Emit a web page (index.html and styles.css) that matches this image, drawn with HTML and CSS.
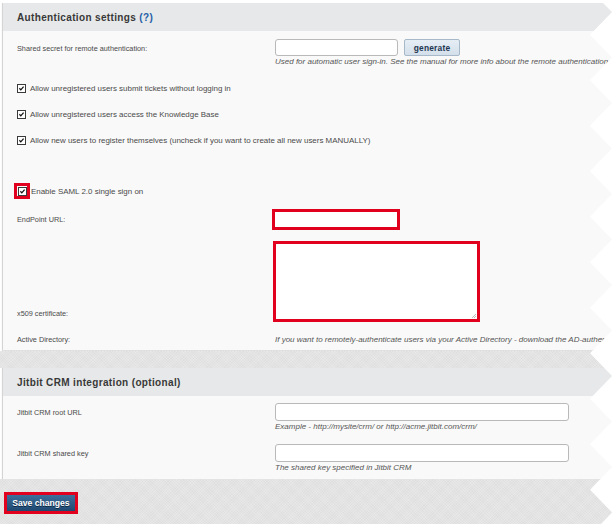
FILE: index.html
```html
<!DOCTYPE html>
<html>
<head>
<meta charset="utf-8">
<link rel="stylesheet" href="styles.css">
</head>
<body>
<div class="page">
  <div class="topline"></div>
  <section class="section">
    <div class="section-head"><h2>Authentication settings <a class="help" href="#">(?)</a></h2></div>
    <div class="section-body s1">
      <div class="row r-secret">
        <div class="label">Shared secret for remote authentication:</div>
        <div class="field">
          <div class="inline">
            <span class="input w-secret"></span>
            <span class="btn-generate">generate</span>
          </div>
          <div class="hint">Used for automatic user sign-in. See the manual for more info about the remote authentication "</div>
        </div>
      </div>
      <div class="row chk-row">
        <span class="chk"><svg viewBox="0 0 9 9" width="9" height="9"><path d="M1.8 4.2 L3.6 6.2 L7.2 2" fill="none" stroke="#111" stroke-width="1.6"/></svg></span>
        <span class="chk-label">Allow unregistered users submit tickets without logging in</span>
      </div>
      <div class="row chk-row">
        <span class="chk"><svg viewBox="0 0 9 9" width="9" height="9"><path d="M1.8 4.2 L3.6 6.2 L7.2 2" fill="none" stroke="#111" stroke-width="1.6"/></svg></span>
        <span class="chk-label">Allow unregistered users access the Knowledge Base</span>
      </div>
      <div class="row chk-row">
        <span class="chk"><svg viewBox="0 0 9 9" width="9" height="9"><path d="M1.8 4.2 L3.6 6.2 L7.2 2" fill="none" stroke="#111" stroke-width="1.6"/></svg></span>
        <span class="chk-label">Allow new users to register themselves (uncheck if you want to create all new users MANUALLY)</span>
      </div>
      <div class="row chk-row saml">
        <span class="mark"><span class="chk"><svg viewBox="0 0 9 9" width="9" height="9"><path d="M1.8 4.2 L3.6 6.2 L7.2 2" fill="none" stroke="#111" stroke-width="1.6"/></svg></span></span>
        <span class="chk-label">Enable SAML 2.0 single sign on</span>
      </div>
      <div class="row r-endpoint">
        <div class="label">EndPoint URL:</div>
        <div class="field"><span class="input red w-endpoint"></span></div>
      </div>
      <div class="row r-cert">
        <div class="label">x509 certificate:</div>
        <div class="field"><span class="input red textarea"><svg class="grip" viewBox="0 0 6 6" width="6" height="6"><path d="M5 1 L1 5 M5 3 L3 5" stroke="#aaa" stroke-width="0.8"/></svg></span></div>
      </div>
      <div class="row r-ad">
        <div class="label">Active Directory:</div>
        <div class="field"><div class="hint">If you want to remotely-authenticate users via your Active Directory - download the AD-authenticator</div></div>
      </div>
    </div>
  </section>
  <div class="hatch gap"></div>
  <section class="section">
    <div class="section-head"><h2>Jitbit CRM integration (optional)</h2></div>
    <div class="section-body s2">
      <div class="row r-crm">
        <div class="label">Jitbit CRM root URL</div>
        <div class="field">
          <span class="input w-crm"></span>
          <div class="hint">Example - http://mysite/crm/ or http://acme.jitbit.com/crm/</div>
        </div>
      </div>
      <div class="row r-crm">
        <div class="label">Jitbit CRM shared key</div>
        <div class="field">
          <span class="input w-crm"></span>
          <div class="hint">The shared key specified in Jitbit CRM</div>
        </div>
      </div>
    </div>
  </section>
  <div class="hatch footer">
    <span class="save-mark"><span class="btn-save">Save changes</span></span>
  </div>
</div>
</body>
</html>
```

FILE: styles.css
```css
* { box-sizing: border-box; }
html, body { margin: 0; padding: 0; background: #ffffff; }
body { font-family: "Liberation Sans", Arial, sans-serif; color: #3a3a3a; }

.page {
  width: 616px;
  height: 524px;
  overflow: hidden;
  background: #ffffff;
  clip-path: polygon(0 0, 600px 0, 612px 12px, 590px 34.75px, 612px 57.5px, 590px 80.25px, 612px 103px, 590px 125.75px, 612px 148.5px, 590px 171.25px, 612px 194px, 590px 216.75px, 612px 239.5px, 590px 262.25px, 612px 285px, 590px 307.75px, 612px 330.5px, 590px 353.25px, 612px 376px, 590px 398.75px, 612px 421.5px, 590px 444.25px, 612px 467px, 590px 489.75px, 612px 512.5px, 601px 524px, 0 524px);
}

.topline { height: 3px; }

.section {
  margin-left: 2px;
  border-left: 1px solid #d4d4d4;
  background: #f9f9f9;
  box-shadow: 0 1px 1px rgba(0,0,0,0.12);
}

.section-head {
  height: 28px;
  background: #e7e8e9;
  display: flex;
  align-items: center;
  padding-left: 14px;
}
.section-head h2 {
  margin: 0;
  font-size: 10px;
  letter-spacing: 0.35px;
  font-weight: bold;
  color: #383838;
}
.help { color: #1f5ea8; text-decoration: none; }

.section-body { padding-left: 14px; }
.s1 { height: 319px; }
.s2 { height: 83px; }

.row { display: flex; }
.label {
  width: 258px;
  flex: none;
  font-size: 7.3px;
  color: #4a4a4a;
}
.field { flex: 1; min-width: 0; }
.hint {
  font-size: 8px;
  font-style: italic;
  color: #555;
  white-space: nowrap;
  margin-top: 2px;
}

.input {
  display: block;
  background: #fff;
  border: 1px solid #b9b9b9;
  border-radius: 3px;
}
.inline { display: flex; align-items: center; gap: 6px; }
.w-secret { width: 123px; height: 17px; }
.btn-generate {
  width: 56px;
  height: 17px;
  border: 1px solid #a7b8c8;
  border-radius: 2px;
  background: linear-gradient(#e6eef5, #d3dfea);
  font-size: 8.4px;
  font-weight: bold;
  color: #1e3752;
  display: flex;
  align-items: center;
  justify-content: center;
  letter-spacing: 0.2px;
}

.r-secret { height: 44px; padding-top: 8px; }
.r-secret .label { padding-top: 5px; }
.r-secret .hint { margin-top: 1px; }

.chk-row { height: 26px; align-items: center; }
.chk {
  width: 9px;
  height: 9px;
  border: 1px solid #3a3a3a;
  background: #fff;
  display: flex;
  flex: none;
}
.chk svg { width: 7px; height: 7px; }
.chk-label { font-size: 7.95px; color: #4a4a4a; margin-left: 4px; }

.saml { margin-top: 25px; }
.mark {
  width: 16px;
  height: 16px;
  border: 3px solid #e1001e;
  display: flex;
  align-items: center;
  justify-content: center;
  margin-left: -3px;
}
.saml .chk-label { margin-left: 1px; }

.red { border: 3px solid #e1001e; border-radius: 0; }
.r-endpoint { height: 31px; padding-top: 5px; }
.r-endpoint .label { padding-top: 6px; }
.w-endpoint { width: 128px; height: 21px; margin-left: -3px; }

.r-cert { height: 94px; padding-top: 6px; }
.r-cert .label { align-self: flex-end; padding-bottom: 11px; }
.textarea { width: 207px; height: 81px; margin-left: -2px; position: relative; }
.grip { position: absolute; right: 0; bottom: 0; }

.r-ad { height: 20px; align-items: center; }
.r-ad .hint { margin-top: 0; }

.hatch {
  background-color: #dfdfdf;
  background-image: repeating-linear-gradient(45deg, rgba(255,255,255,0.14) 0 1px, transparent 1px 2px),
                    repeating-linear-gradient(-45deg, rgba(255,255,255,0.14) 0 1px, transparent 1px 2px);
}
.gap { height: 17px; margin-top: 1px; }

.r-crm { height: 41px; padding-top: 7px; }
.r-crm .label { padding-top: 5px; }
.w-crm { width: 294px; height: 18px; }
.s2 .hint { margin-top: 1px; }

.footer { height: 46px; padding: 13px 0 0 4px; }
.save-mark {
  display: inline-flex;
  border: 3px solid #e1001e;
  width: 74px;
  height: 22px;
}
.btn-save {
  flex: 1;
  background: linear-gradient(#3d6f9c, #1f4870);
  color: #fff;
  font-size: 8.6px;
  font-weight: bold;
  display: flex;
  align-items: center;
  justify-content: center;
  text-shadow: 0 1px 0 #0d2640;
}
```
